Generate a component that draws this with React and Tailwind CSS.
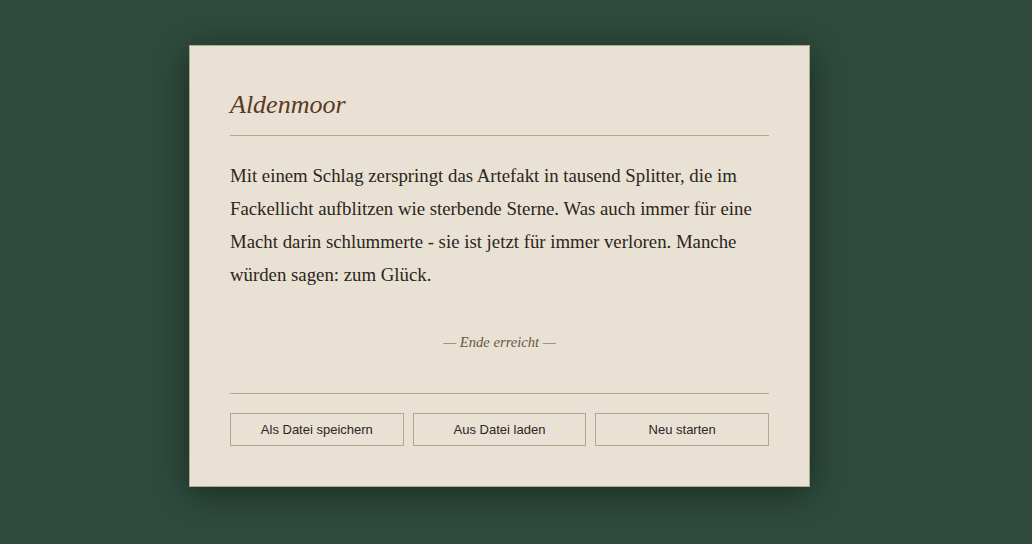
export default function App() {
  const serif = "font-['Liberation_Serif','DejaVu_Serif',serif]";
  return (
    <div className="min-h-screen w-full bg-[#2e4b3d] pt-[45px] pb-[57px]">
      <div className="ml-[189px] w-[621px] border border-[#b3a88e] bg-[#e9e1d3] px-10 py-10 shadow-[0_6px_32px_rgba(0,0,0,0.45)]">
        <h1 className={`${serif} border-b border-[#b3a88e] pt-[2px] pb-[13px] text-[26px] italic leading-[34px] text-[#5b3a27]`}>
          Aldenmoor
        </h1>
        <p className={`${serif} mt-[23px] text-[18.8px] leading-[33px] text-[#2b2620]`}>
          Mit einem Schlag zerspringt das Artefakt in tausend Splitter, die im
          Fackellicht aufblitzen wie sterbende Sterne. Was auch immer für eine
          Macht darin schlummerte - sie ist jetzt für immer verloren. Manche
          würden sagen: zum Glück.
        </p>
        <p className={`${serif} mt-[39px] text-center text-[14.6px] italic leading-6 text-[#6a5545]`}>
          — Ende erreicht —
        </p>
        <div className="mt-[39px] border-t border-[#b3a88e] pt-[19px]">
          <div className="grid grid-cols-3 gap-[9px]">
            {["Als Datei speichern", "Aus Datei laden", "Neu starten"].map((label) => (
              <button
                key={label}
                className="h-[33px] border border-[#b3a88e] bg-transparent font-['Liberation_Sans',Arial,sans-serif] text-[13px] text-[#2b2620]"
              >
                {label}
              </button>
            ))}
          </div>
        </div>
      </div>
    </div>
  );
}
